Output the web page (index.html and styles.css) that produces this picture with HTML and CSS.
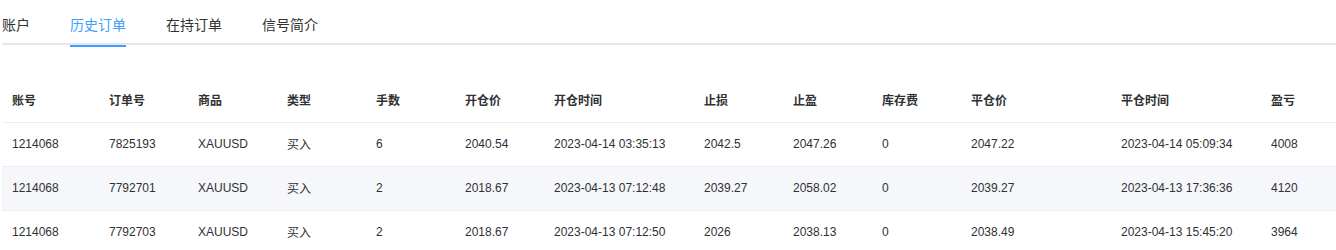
FILE: index.html
```html
<!DOCTYPE html>
<html lang="zh-CN">
<head>
<meta charset="utf-8">
<title>历史订单</title>
<link rel="stylesheet" href="styles.css">
</head>
<body>
<div class="page">
  <div class="tabs">
    <div class="tab">账户</div>
    <div class="tab active">历史订单</div>
    <div class="tab">在持订单</div>
    <div class="tab">信号简介</div>
  </div>
  <table class="orders">
    <colgroup>
      <col class="c97"><col class="c89"><col class="c89"><col class="c89"><col class="c89"><col class="c89">
      <col class="c150"><col class="c89"><col class="c89"><col class="c89"><col class="c150"><col class="c150"><col>
    </colgroup>
    <thead>
      <tr>
        <th>账号</th><th>订单号</th><th>商品</th><th>类型</th><th>手数</th><th>开仓价</th><th>开仓时间</th><th>止损</th><th>止盈</th><th>库存费</th><th>平仓价</th><th>平仓时间</th><th>盈亏</th>
      </tr>
    </thead>
    <tbody>
      <tr>
        <td>1214068</td><td>7825193</td><td>XAUUSD</td><td class="cjk">买入</td><td>6</td><td>2040.54</td><td>2023-04-14 03:35:13</td><td>2042.5</td><td>2047.26</td><td>0</td><td>2047.22</td><td>2023-04-14 05:09:34</td><td>4008</td>
      </tr>
      <tr class="stripe">
        <td>1214068</td><td>7792701</td><td>XAUUSD</td><td class="cjk">买入</td><td>2</td><td>2018.67</td><td>2023-04-13 07:12:48</td><td>2039.27</td><td>2058.02</td><td>0</td><td>2039.27</td><td>2023-04-13 17:36:36</td><td>4120</td>
      </tr>
      <tr>
        <td>1214068</td><td>7792703</td><td>XAUUSD</td><td class="cjk">买入</td><td>2</td><td>2018.67</td><td>2023-04-13 07:12:50</td><td>2026</td><td>2038.13</td><td>0</td><td>2038.49</td><td>2023-04-13 15:45:20</td><td>3964</td>
      </tr>
    </tbody>
  </table>
</div>
</body>
</html>
```
FILE: styles.css
```css
* { box-sizing: border-box; }
html, body { margin: 0; padding: 0; background: #fff; }
body {
  font-family: "Liberation Sans", "Noto Sans CJK SC", sans-serif;
  color: #303133;
}
.page {
  padding: 5px 0 0 2px;
}
.tabs {
  display: flex;
  height: 40px;
  border-bottom: 2px solid #e4e7ed;
}
.tab {
  height: 40px;
  line-height: 38px;
  padding: 0 20px;
  font-size: 14px;
  color: #303133;
  font-family: "Noto Sans CJK SC", sans-serif;
  position: relative;
}
.tab:first-child { padding-left: 0; }
.tab.active { color: #409eff; }
.tab.active::after {
  content: "";
  position: absolute;
  left: 20px;
  right: 20px;
  bottom: -2px;
  height: 2px;
  background: #409eff;
}
.orders {
  margin-top: 33px;
  width: 100%;
  border-collapse: collapse;
  table-layout: fixed;
  font-size: 12px;
}
.c97 { width: 97px; }
.c89 { width: 89px; }
.c150 { width: 150px; }
.orders th, .orders td {
  height: 44px;
  padding: 0 10px;
  line-height: 16px;
  text-align: left;
  vertical-align: middle;
  border-bottom: 1px solid #ebeef5;
  white-space: nowrap;
  overflow: hidden;
}
.orders th {
  font-weight: bold;
  color: #303133;
  font-family: "Noto Sans CJK SC", sans-serif;
}
.orders td { color: #303133; }
.orders td.cjk { font-family: "Noto Sans CJK SC", sans-serif; }
.orders tr.stripe td { background: #f5f7fa; }
```
